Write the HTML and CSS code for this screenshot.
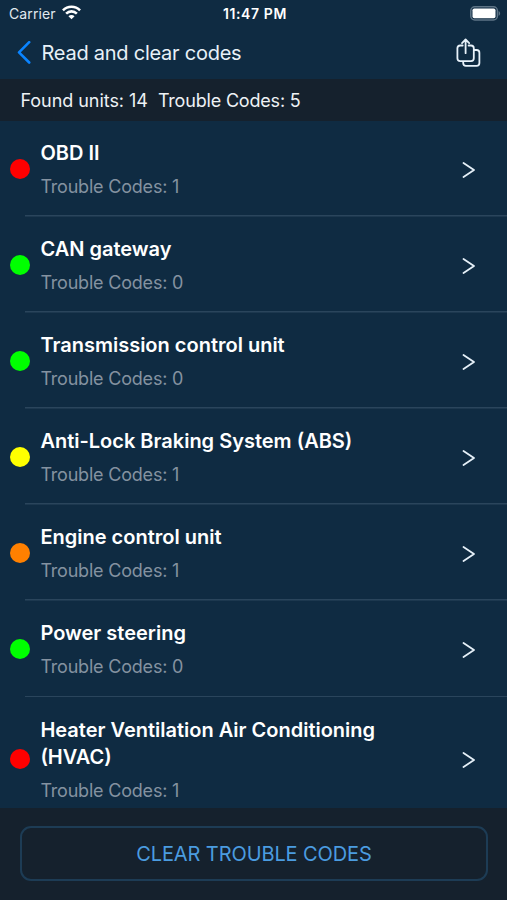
FILE: index.html
```html
<!DOCTYPE html>
<html lang="en">
<head>
<meta charset="utf-8">
<title>Read and clear codes</title>
<link rel="stylesheet" href="styles.css">
</head>
<body>
<div class="app">
  <header class="top">
    <div class="status">
      <div class="carrier"><span class="carrier-name">Carrier</span>
        <svg class="wifi" width="19" height="15" viewBox="0 0 18 14" fill="none" stroke="#fff" stroke-width="2.4"><path d="M.9 5.1C5.4.4 12.6.4 17.1 5.1M3.9 8.1c2.9-2.9 7.3-2.9 10.2 0"/><path d="M9 13.4 6.1 10.5c1.6-1.5 4.2-1.5 5.8 0Z" fill="#fff" stroke="none"/></svg>
      </div>
      <div class="time"><span>11:47 PM</span></div>
      <svg class="battery" width="31" height="15" viewBox="0 0 31 15"><rect x=".8" y=".8" width="26.6" height="13.2" rx="4" fill="none" stroke="#5e7486" stroke-width="1.5"/><rect x="2.5" y="2.5" width="23" height="9.8" rx="1.8" fill="#fff"/><path d="M28.6 5v4.8c2-.8 2-4 0-4.8Z" fill="#5e7486"/></svg>
    </div>
    <nav class="nav">
      <svg class="back" width="15" height="24" viewBox="0 0 15 24" fill="none" stroke="#0a84ff" stroke-width="2.6" stroke-linecap="round" stroke-linejoin="round"><path d="M13.2 1.2 3 11.3l10.2 10.2"/></svg>
      <h1 class="heading"><span>Read and clear codes</span></h1>
      <svg class="share" width="26" height="30" viewBox="0 0 26 30" fill="none" stroke="#e8f2fa" stroke-width="1.8" stroke-linecap="round" stroke-linejoin="round"><path d="M6.7 7.5H4.2Q1.4 7.5 1.4 10.3V20.3Q1.4 23.1 4.2 23.1H15Q17.8 23.1 17.8 20.3V10.3Q17.8 7.5 15 7.5H12.6M9.6 15.2V1.7M6 5.1 9.6 1.5l3.6 3.6M18.2 12H20.6Q23.4 12 23.4 14.8V25Q23.4 27.8 20.6 27.8H10Q7.2 27.8 7.2 25V23.5"/></svg>
    </nav>
  </header>
  <div class="summary"><span class="found">Found units: 14</span><span class="total">Trouble Codes: 5</span></div>
  <main class="list">
    <div class="row"><i class="dot red"></i><div class="info"><h2><span>OBD II</span></h2><p><span>Trouble Codes: 1</span></p></div><svg class="chev" viewBox="0 0 14 18"><path d="M1.5 2 12 9 1.5 16"/></svg></div>
    <div class="row"><i class="dot green"></i><div class="info"><h2><span>CAN gateway</span></h2><p><span>Trouble Codes: 0</span></p></div><svg class="chev" viewBox="0 0 14 18"><path d="M1.5 2 12 9 1.5 16"/></svg></div>
    <div class="row"><i class="dot green"></i><div class="info"><h2><span>Transmission control unit</span></h2><p><span>Trouble Codes: 0</span></p></div><svg class="chev" viewBox="0 0 14 18"><path d="M1.5 2 12 9 1.5 16"/></svg></div>
    <div class="row"><i class="dot yellow"></i><div class="info"><h2><span>Anti-Lock Braking System (ABS)</span></h2><p><span>Trouble Codes: 1</span></p></div><svg class="chev" viewBox="0 0 14 18"><path d="M1.5 2 12 9 1.5 16"/></svg></div>
    <div class="row"><i class="dot orange"></i><div class="info"><h2><span>Engine control unit</span></h2><p><span>Trouble Codes: 1</span></p></div><svg class="chev" viewBox="0 0 14 18"><path d="M1.5 2 12 9 1.5 16"/></svg></div>
    <div class="row"><i class="dot green"></i><div class="info"><h2><span>Power steering</span></h2><p><span>Trouble Codes: 0</span></p></div><svg class="chev" viewBox="0 0 14 18"><path d="M1.5 2 12 9 1.5 16"/></svg></div>
    <div class="row"><i class="dot red"></i><div class="info"><h2><span>Heater Ventilation Air Conditioning<br>(HVAC)</span></h2><p><span>Trouble Codes: 1</span></p></div><svg class="chev" viewBox="0 0 14 18"><path d="M1.5 2 12 9 1.5 16"/></svg></div>
  </main>
  <footer class="footer"><button class="clear"><span>CLEAR TROUBLE CODES</span></button></footer>
</div>
</body>
</html>
```
FILE: styles.css
```css
* { box-sizing: border-box; }
body { margin: 0; background: #0f2b42; }
h1, h2, p { margin: 0; }
svg { display: block; flex: none; }
.app {
  width: 507px;
  height: 900px;
  display: flex;
  flex-direction: column;
  overflow: hidden;
  font-family: Inter, "Liberation Sans", sans-serif;
  color: #fff;
}
.top { height: 78.5px; flex: none; }
.status {
  height: 27px;
  display: grid;
  grid-template-columns: 1fr auto 1fr;
  align-items: center;
  padding: 0 6px 0 9px;
}
.carrier { display: flex; align-items: center; gap: 6px; font-size: 14px; color: #e1e9ef; letter-spacing: .1px; }
.wifi { margin-top: -2px; }
.time { font-size: 14px; font-weight: 600; letter-spacing: .6px; }
.battery { justify-self: end; }
.nav { height: 52px; display: flex; align-items: center; padding: 0 25px 0 16px; }
.heading { flex: 1; margin-left: 10.5px; font-size: 20px; font-weight: 400; letter-spacing: -.25px; color: #e8f1f8; }
.share { margin-top: -1px; }
.summary {
  flex: none;
  height: 42px;
  padding: 1px 0 0 20.5px;
  display: flex;
  align-items: center;
  gap: 10px;
  background: #15212d;
  color: #eef2f5;
  font-size: 18px;
}
.found { letter-spacing: -.05px; }
.total { letter-spacing: -.18px; }
.list { flex: 1; min-height: 0; overflow: hidden; }
.row {
  display: flex;
  align-items: center;
  padding: 0 31px 0 10.4px;
  min-height: 96.1px;
  background: linear-gradient(#2a455c, #2a455c) 25px 100% / 100% 1.5px no-repeat;
}
.dot { width: 20px; height: 20px; border-radius: 50%; flex: none; }
.red { background: #f00; }
.green { background: #0f0; }
.yellow { background: #ff0; }
.orange { background: #ff8000; }
.info { flex: 1; margin-left: 10px; padding: 19.5px 0 17.6px; }
.info h2 { font-size: 20px; line-height: 27px; font-weight: 600; }
.info p { margin-top: 8px; font-size: 18px; line-height: 24px; letter-spacing: -.2px; color: #8492a0; }
.chev { width: 14px; height: 18px; margin-top: 2px; fill: none; stroke: #e6f0f8; stroke-width: 1.8; stroke-linecap: round; stroke-linejoin: round; }
.footer { flex: none; height: 92px; padding: 18px 19px 0 20px; background: #15212d; }
.clear {
  width: 100%;
  height: 55px;
  border: 2px solid #1d3c55;
  border-radius: 11px;
  background: none;
  color: #4b9ce0;
  font: 400 20px Inter, "Liberation Sans", sans-serif;
  letter-spacing: -.1px;
}
```
